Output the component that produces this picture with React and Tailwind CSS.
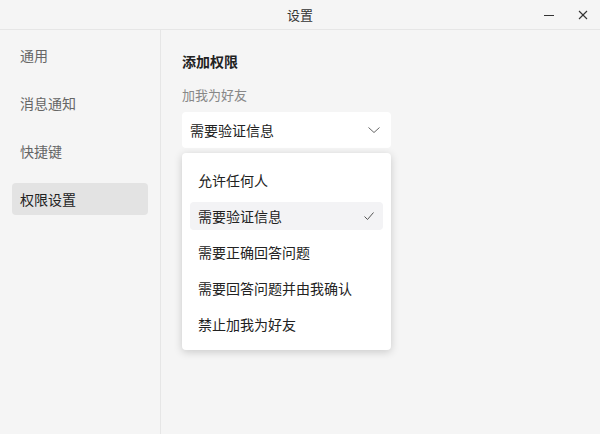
import React from "react";

const NAV = ["通用", "消息通知", "快捷键", "权限设置"];
const OPTIONS = ["允许任何人", "需要验证信息", "需要正确回答问题", "需要回答问题并由我确认", "禁止加我为好友"];

const ChevronIcon = () => (
  <svg className="h-4 w-4" fill="none" viewBox="0 0 16 16" stroke="#666" strokeWidth={1}>
    <polyline points="2.5,5.5 8,10.5 13.5,5.5" />
  </svg>
);

const CheckIcon = () => (
  <svg className="h-3 w-3" fill="none" viewBox="0 0 12 12" stroke="#555" strokeWidth={1}>
    <polyline points="1.5,6.5 4.5,9.5 10.5,2.5" />
  </svg>
);

export default function App() {
  const font = { fontFamily: '"Noto Sans CJK SC", "Noto Sans", sans-serif' };
  return (
    <div className="w-[600px] h-[434px] bg-[#f5f5f5] flex flex-col text-[#222]" style={font}>
      <div className="h-[30px] shrink-0 flex items-center justify-center relative border-b border-[#e6e6e6]">
        <span className="text-[13px] text-[#333]">设置</span>
        <div className="absolute right-0 top-0 h-[30px] flex items-center">
          <div className="w-[34px] flex justify-center">
            <div className="w-[10px] h-px bg-[#333]" />
          </div>
          <div className="w-[34px] flex justify-center">
            <svg className="h-[10px] w-[10px]" viewBox="0 0 10 10" stroke="#333" strokeWidth={1.1}>
              <line x1="1" y1="1" x2="9" y2="9" />
              <line x1="9" y1="1" x2="1" y2="9" />
            </svg>
          </div>
        </div>
      </div>
      <div className="flex flex-1">
        <div className="w-[161px] shrink-0 border-r border-[#e6e6e6] px-3 pt-[9px] flex flex-col gap-4">
          {NAV.map((item, i) => (
            <div
              key={item}
              className={`h-[32px] flex items-center px-2 rounded text-[14px] ${i === 3 ? "bg-[#e3e3e3] text-[#222]" : "text-[#666]"}`}
            >
              {item}
            </div>
          ))}
        </div>
        <div className="flex-1 pl-[21px] pt-[21px]">
          <div className="text-[14px] font-bold text-[#222] leading-5">添加权限</div>
          <div className="text-[13px] text-[#888] mt-[14px] leading-5">加我为好友</div>
          <div className="w-[209px] mt-[7px] relative">
            <div className="h-[36px] bg-white rounded flex items-center justify-between pl-[8px] pr-[9px] text-[14px] text-[#222]">
              <span>需要验证信息</span>
              <ChevronIcon />
            </div>
            <div className="absolute left-0 top-[41px] w-[209px] bg-white rounded shadow-[0_2px_8px_rgba(0,0,0,0.18)] px-[8px] pt-[13px] pb-[12px] flex flex-col gap-[8px]">
              {OPTIONS.map((opt, i) => (
                <div
                  key={opt}
                  className={`h-[28px] flex items-center justify-between px-[8px] rounded text-[14px] text-[#222] ${i === 1 ? "bg-[#f3f3f5]" : ""}`}
                >
                  <span>{opt}</span>
                  {i === 1 && <CheckIcon />}
                </div>
              ))}
            </div>
          </div>
        </div>
      </div>
    </div>
  );
}
